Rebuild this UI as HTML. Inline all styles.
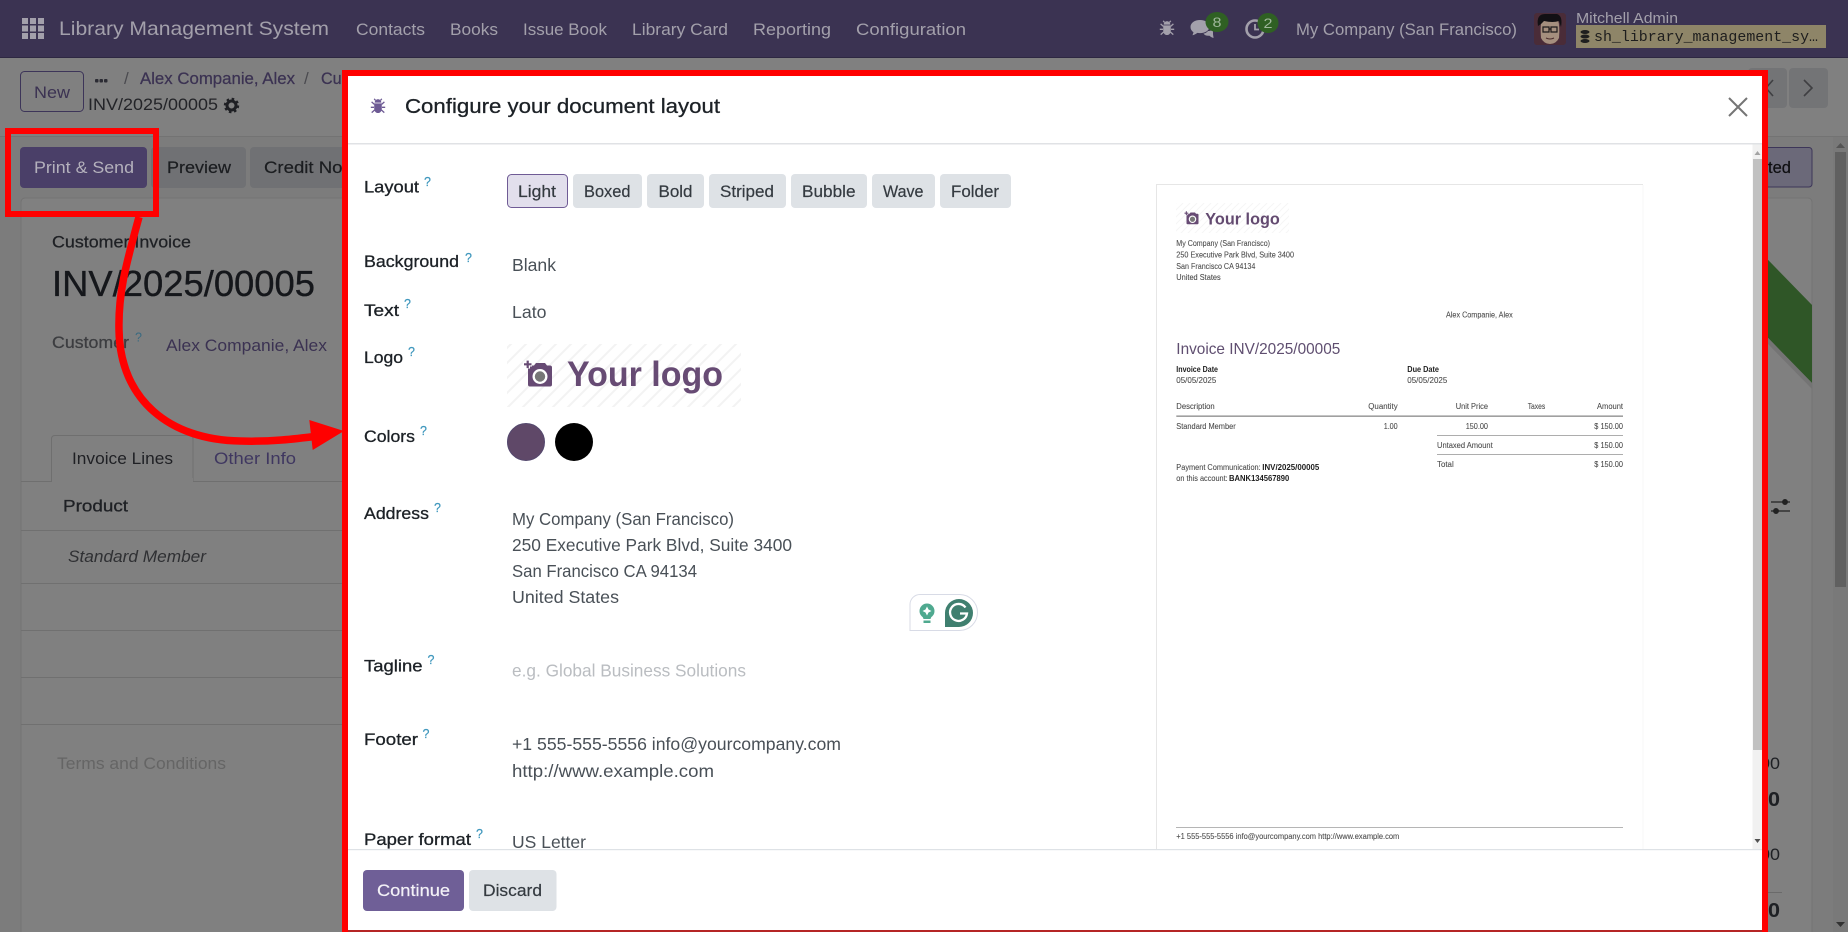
<!DOCTYPE html>
<html lang="en">
<head>
<meta charset="utf-8">
<title>Configure your document layout</title>
<style>
html,body{margin:0;padding:0;width:1848px;height:932px;overflow:hidden;background:#808080}
svg{display:block;position:absolute;left:0;top:0}
text{font-family:"Liberation Sans",sans-serif;white-space:pre}
.nav{font-size:16.5px;fill:#a3a0ab}
.lab{font-size:17px;fill:#1c2126;stroke:#1c2126;stroke-width:.3px}
.q{font-size:12.5px;fill:#3f97bd;stroke:#3f97bd;stroke-width:.2px}
.val{font-size:17.5px;fill:#495057}
.btn{font-size:17px;fill:#343a40;stroke:#343a40;stroke-width:.2px}
.s{font-size:8.6px;fill:#4a4a4a;stroke:#4a4a4a;stroke-width:.08px}
.sb{font-size:8.6px;fill:#1d1d1d;font-weight:bold}
.bg{font-size:17px;fill:#1e2024}
</style>
</head>
<body>
<svg width="1848" height="932" viewBox="0 0 1848 932" xmlns="http://www.w3.org/2000/svg">
<defs>
<pattern id="hb" patternUnits="userSpaceOnUse" width="15" height="15">
<path d="M-4 4L4 -4M0 15L15 0M11 19L19 11" stroke="#f3f3f3" stroke-width="2"/>
</pattern>
<pattern id="hs" patternUnits="userSpaceOnUse" width="7" height="7">
<path d="M-2 2L2 -2M0 7L7 0M5 9L9 5" stroke="#f6f6f6" stroke-width="1"/>
</pattern>
<symbol id="bug" viewBox="0 0 16 16">
<path d="M4.6 4.6C4.8 2.4 6.2 1.2 8 1.2s3.2 1.2 3.4 3.4z"/>
<path d="M4.2 5.4h7.6v5.2c0 2.6-1.6 4.4-3.8 4.4s-3.8-1.8-3.8-4.4z"/>
<path d="M4.4 6.4L1.6 3.9M11.6 6.4l2.8-2.5M4 9.3H.8M12 9.3h3.2M4.6 12l-2.9 2.6M11.4 12l2.9 2.6M5.5 2.4L4.2.8M10.5 2.4L11.8.8" stroke="currentColor" stroke-width="1.3" fill="none"/>
</symbol>
<symbol id="cam" viewBox="0 0 30 28">
<path d="M5 7.5q0-2 2-2h4l2-2.5h9l2 2.5h3q2 0 2 2v17q0 2-2 2H7q-2 0-2-2z" fill="#674b74"/>
<circle cx="17" cy="16.5" r="7.5" fill="#fff"/>
<circle cx="17" cy="16.5" r="5.2" fill="#777"/>
<path d="M0 4h9M4.500 0v8.500" stroke="#fff" stroke-width="5"/>
<path d="M1 4.300h7.500M4.700 .6v7.500" stroke="#674b74" stroke-width="2.200"/>
</symbol>
<clipPath id="nameclip"><rect x="0" y="0" width="342" height="136"/></clipPath>
</defs>

<!-- backdrop page -->
<rect width="1848" height="932" fill="#808080"/>
<rect x="0" y="136" width="1848" height="796" fill="#7c7c7c"/>
<rect x="0" y="136" width="1848" height="1" fill="#737373"/>
<rect x="21" y="198" width="1791" height="740" rx="4" fill="#808080" stroke="#737373"/>

<!-- navbar -->
<rect width="1848" height="58" fill="#3b3352"/>
<rect y="57" width="1848" height="1" fill="#2e2842"/>
<g fill="#a3a0ab">
<rect x="22" y="18" width="6" height="6"/><rect x="30" y="18" width="6" height="6"/><rect x="38" y="18" width="6" height="6"/>
<rect x="22" y="25.500" width="6" height="6"/><rect x="30" y="25.500" width="6" height="6"/><rect x="38" y="25.500" width="6" height="6"/>
<rect x="22" y="33" width="6" height="6"/><rect x="30" y="33" width="6" height="6"/><rect x="38" y="33" width="6" height="6"/>
</g>
<text x="59" y="35" class="nav" style="font-size:19.500px" textLength="270" lengthAdjust="spacingAndGlyphs">Library Management System</text>
<text x="356" y="35" class="nav" textLength="69" lengthAdjust="spacingAndGlyphs">Contacts</text>
<text x="450" y="35" class="nav" textLength="48" lengthAdjust="spacingAndGlyphs">Books</text>
<text x="523" y="35" class="nav" textLength="84" lengthAdjust="spacingAndGlyphs">Issue Book</text>
<text x="632" y="35" class="nav" textLength="96" lengthAdjust="spacingAndGlyphs">Library Card</text>
<text x="753" y="35" class="nav" textLength="78" lengthAdjust="spacingAndGlyphs">Reporting</text>
<text x="856" y="35" class="nav" textLength="110" lengthAdjust="spacingAndGlyphs">Configuration</text>

<use href="#bug" x="1159" y="20" width="16" height="16" fill="#a3a0ab" color="#a3a0ab"/>
<!-- chat -->
<path d="M1200 20c-5.500 0-9.500 3-9.500 7 0 2.200 1.200 4 3 5.300l-1 3c2-.5 3.500-1.300 4.800-2.400 .9 .2 1.800 .2 2.700 .2 5.500 0 9.500-3 9.500-6.500S1205.500 20 1200 20z" fill="#a3a0ab"/>
<path d="M1208 31c2.500 0 4.500-.8 5-2v5c0 1 .5 2.500 .5 4-1.500-.5-3-1.300-4-2.300-2.500 .4-5-.4-6-2.200 2 0 3.500-1.500 4.500-2.500z" fill="#a3a0ab"/>
<ellipse cx="1217" cy="22" rx="11.500" ry="10" fill="#2f6023"/>
<text x="1212.500" y="27" style="font-size:13.500px" fill="#9fb79a" textLength="9" lengthAdjust="spacingAndGlyphs">8</text>
<!-- activity clock -->
<circle cx="1255" cy="29" r="8.500" fill="none" stroke="#a3a0ab" stroke-width="2.600"/>
<path d="M1255 24v5.500h4" stroke="#a3a0ab" stroke-width="1.800" fill="none"/>
<ellipse cx="1268" cy="23" rx="10.500" ry="10" fill="#2f6023"/>
<text x="1263.500" y="28" style="font-size:13.500px" fill="#9fb79a" textLength="9" lengthAdjust="spacingAndGlyphs">2</text>
<text x="1296" y="35" class="nav" textLength="221" lengthAdjust="spacingAndGlyphs">My Company (San Francisco)</text>
<!-- avatar -->
<rect x="1534" y="13" width="32" height="32" rx="3" fill="#4a2c38"/>
<path d="M1541 38q-1-14 1-18l16 0q2 6 1 18q-3 6-9 6t-9-6z" fill="#a58f7e"/>
<path d="M1538 26q-2-12 7-12h12q6 2 4 13l-2-6q-6 2-15 0l-3 3z" fill="#121014"/>
<path d="M1543 27h6v5h-6zM1551 27h6v5h-6zM1549 29h2" fill="none" stroke="#1e1a1c" stroke-width="1.200"/>
<path d="M1546 38q4 2 8 0" stroke="#4a2c2c" stroke-width="1" fill="none"/>
<text x="1576" y="23" class="nav" style="font-size:15px" textLength="102" lengthAdjust="spacingAndGlyphs">Mitchell Admin</text>
<rect x="1576" y="25" width="250" height="23" fill="#8e8568"/>
<g fill="#1f1f1f"><ellipse cx="1585" cy="32" rx="4.500" ry="2"/><ellipse cx="1585" cy="36.500" rx="4.500" ry="2"/><ellipse cx="1585" cy="41" rx="4.500" ry="2"/></g>
<text x="1594" y="41" style="font-family:'Liberation Mono',monospace;font-size:15px" fill="#1e1e1e" textLength="224" lengthAdjust="spacingAndGlyphs">sh_library_management_sy…</text>

<!-- control panel -->
<rect x="20.500" y="71.500" width="63" height="40" rx="4" fill="none" stroke="#3d3559"/>
<text x="34" y="98" class="bg" style="fill:#3b3252" textLength="36" lengthAdjust="spacingAndGlyphs">New</text>
<g fill="#2b2b33"><rect x="95" y="79" width="3.500" height="3.500" rx="1"/><rect x="99.500" y="79" width="3.500" height="3.500" rx="1"/><rect x="104" y="79" width="3.500" height="3.500" rx="1"/></g>
<text x="124" y="84" class="bg" style="fill:#4a4a4f">/</text>
<text x="140" y="84" class="bg" style="fill:#3b3252;stroke:#3b3252;stroke-width:.25px" textLength="155" lengthAdjust="spacingAndGlyphs">Alex Companie, Alex</text>
<text x="304" y="84" class="bg" style="fill:#4a4a4f">/</text>
<g clip-path="url(#nameclip)"><text x="321" y="84" class="bg" style="fill:#3b3252;stroke:#3b3252;stroke-width:.25px" textLength="70" lengthAdjust="spacingAndGlyphs">Customer</text></g>
<text x="88" y="110" class="bg" style="fill:#232428" textLength="130" lengthAdjust="spacingAndGlyphs">INV/2025/00005</text>
<circle cx="231.500" cy="105.500" r="4.500" fill="none" stroke="#1f2024" stroke-width="3"/>
<circle cx="231.500" cy="105.500" r="6.500" fill="none" stroke="#1f2024" stroke-width="2.400" stroke-dasharray="2.500 2.600"/>

<rect x="1748" y="68" width="39" height="40" rx="4" fill="#737476"/>
<rect x="1789" y="68" width="39" height="40" rx="4" fill="#737476"/>
<path d="M1773 80l-7 8 7 8" stroke="#3f3f42" stroke-width="1.600" fill="none"/>
<path d="M1804 80l8 8-8 8" stroke="#3f3f42" stroke-width="1.600" fill="none"/>

<!-- buttons behind -->
<rect x="20" y="147" width="127" height="41" rx="4" fill="#4a3f68"/>
<text x="34" y="173" class="bg" style="fill:#b4b1bc" textLength="100" lengthAdjust="spacingAndGlyphs">Print &amp; Send</text>
<rect x="151" y="147" width="95" height="41" rx="4" fill="#707174"/>
<text x="167" y="173" class="bg" style="fill:#1b1d20;stroke:#1b1d20;stroke-width:.2px" textLength="64" lengthAdjust="spacingAndGlyphs">Preview</text>
<rect x="250" y="147" width="120" height="41" rx="4" fill="#707174"/>
<text x="264" y="173" class="bg" style="fill:#1b1d20;stroke:#1b1d20;stroke-width:.2px" textLength="94" lengthAdjust="spacingAndGlyphs">Credit Note</text>
<rect x="1700" y="147.500" width="112" height="39.500" rx="3" fill="#6b6979" stroke="#3d3659"/>
<text x="1768" y="173" class="bg" style="fill:#0f0f12;stroke:#0f0f12;stroke-width:.2px" textLength="23" lengthAdjust="spacingAndGlyphs">ted</text>

<!-- ribbon -->
<path d="M1700 190L1812 305V383L1700 268z" fill="#2f5627"/>
<path d="M1768 338L1812 383v6L1768 344z" fill="#747474"/>

<!-- sheet contents -->
<text x="52" y="247.500" class="bg" style="stroke:#1e2024;stroke-width:.25px" textLength="139" lengthAdjust="spacingAndGlyphs">Customer Invoice</text>
<text x="52" y="296" style="font-size:36.500px;stroke:#15171b;stroke-width:.35px" fill="#15171b" textLength="263" lengthAdjust="spacingAndGlyphs">INV/2025/00005</text>
<text x="52" y="348" class="bg" style="fill:#3c3d40;stroke:#3c3d40;stroke-width:.25px" textLength="77" lengthAdjust="spacingAndGlyphs">Customer</text>
<text x="135" y="341.500" class="q" style="fill:#3a6a80;stroke:none">?</text>
<text x="166" y="351" class="bg" style="fill:#3b3252" textLength="161" lengthAdjust="spacingAndGlyphs">Alex Companie, Alex</text>
<path d="M21 481.500H51.500V439q0-3.500 3.500-3.500H189.500q3.500 0 3.500 3.500V481.500H342" fill="none" stroke="#6f6f6f"/>
<rect x="52" y="478" width="141" height="5" fill="#808080"/>
<text x="72" y="464" class="bg" style="fill:#1f2024" textLength="101" lengthAdjust="spacingAndGlyphs">Invoice Lines</text>
<text x="214" y="464" class="bg" style="fill:#3f3760" textLength="82" lengthAdjust="spacingAndGlyphs">Other Info</text>
<text x="63" y="511.500" class="bg" style="stroke:#1e2024;stroke-width:.3px" textLength="65" lengthAdjust="spacingAndGlyphs">Product</text>
<g fill="#707070">
<rect x="21" y="530" width="321" height="1"/>
<rect x="21" y="583" width="321" height="1"/>
<rect x="21" y="630" width="321" height="1"/>
<rect x="21" y="677" width="321" height="1"/>
<rect x="21" y="724" width="321" height="1"/>
</g>
<text x="68" y="562" class="bg" style="fill:#2f3033;font-style:italic" textLength="138" lengthAdjust="spacingAndGlyphs">Standard Member</text>
<text x="57" y="769" class="bg" style="fill:#656565" textLength="169" lengthAdjust="spacingAndGlyphs">Terms and Conditions</text>

<text x="1760" y="769" class="bg" textLength="20" lengthAdjust="spacingAndGlyphs">00</text>
<text x="1768" y="806" class="bg" style="font-size:20px;font-weight:bold" textLength="12" lengthAdjust="spacingAndGlyphs">0</text>
<text x="1760" y="860" class="bg" textLength="20" lengthAdjust="spacingAndGlyphs">00</text>
<rect x="1768" y="892" width="14" height="1" fill="#6a6a6a"/>
<text x="1768" y="917" class="bg" style="font-size:20px;font-weight:bold" textLength="12" lengthAdjust="spacingAndGlyphs">0</text>

<!-- sliders icon -->
<g stroke="#222" stroke-width="1.300" fill="#222">
<path d="M1771 502h19M1771 511h19" fill="none"/>
<circle cx="1785" cy="502" r="2.300"/><circle cx="1776" cy="511" r="2.300"/>
</g>

<!-- outer scrollbar -->
<rect x="1833" y="137" width="15" height="795" fill="#797979"/>
<rect x="1835" y="152" width="11" height="435" fill="#606060"/>
<path d="M1836 148l4.500-5 4.500 5z" fill="#555"/>
<path d="M1836 922l4.500 5 4.500-5z" fill="#333"/>

<!-- red annotation -->
<rect x="8" y="131" width="148" height="83" fill="none" stroke="#ff0000" stroke-width="6"/>
<path d="M139 217C128 258 118 290 119 330C120 400 170 440 240 441C270 442 295 439 318 436" fill="none" stroke="#ff0000" stroke-width="7.500"/>
<path d="M309.300 420L344 431L312.700 450z" fill="#ff0000"/>

<!-- modal -->
<rect x="348" y="76" width="1414" height="854" fill="#fff"/>
<rect x="348" y="143" width="1414" height="1.500" fill="#e0e2e5"/>
<use href="#bug" x="370" y="98" width="16" height="16" fill="#6d5a94" color="#6d5a94"/>
<text x="405" y="113" style="font-size:20.500px;stroke:#1c2126;stroke-width:.3px" fill="#1c2126" textLength="315" lengthAdjust="spacingAndGlyphs">Configure your document layout</text>
<path d="M1729 98L1747 116M1747 98L1729 116" stroke="#757575" stroke-width="2"/>

<!-- modal labels -->
<text x="364" y="192.500" class="lab" textLength="55" lengthAdjust="spacingAndGlyphs">Layout</text><text x="424" y="186" class="q">?</text>
<text x="364" y="267" class="lab" textLength="95" lengthAdjust="spacingAndGlyphs">Background</text><text x="465" y="262" class="q">?</text>
<text x="364" y="316" class="lab" textLength="35" lengthAdjust="spacingAndGlyphs">Text</text><text x="404" y="308" class="q">?</text>
<text x="364" y="363" class="lab" textLength="39" lengthAdjust="spacingAndGlyphs">Logo</text><text x="408" y="356" class="q">?</text>
<text x="364" y="442" class="lab" textLength="51" lengthAdjust="spacingAndGlyphs">Colors</text><text x="420" y="435" class="q">?</text>
<text x="364" y="519" class="lab" textLength="65" lengthAdjust="spacingAndGlyphs">Address</text><text x="434" y="512" class="q">?</text>
<text x="364" y="671.500" class="lab" textLength="58.500" lengthAdjust="spacingAndGlyphs">Tagline</text><text x="427.500" y="664" class="q">?</text>
<text x="364" y="745" class="lab" textLength="54" lengthAdjust="spacingAndGlyphs">Footer</text><text x="422.500" y="738" class="q">?</text>
<text x="364" y="845" class="lab" textLength="107" lengthAdjust="spacingAndGlyphs">Paper format</text><text x="476" y="838" class="q">?</text>

<!-- layout buttons -->
<rect x="507.500" y="174.500" width="60" height="33" rx="4" fill="#e2dfec" stroke="#6f5b95"/>
<text x="518" y="197" class="btn" textLength="38" lengthAdjust="spacingAndGlyphs">Light</text>
<rect x="573" y="174" width="69" height="34" rx="4" fill="#dee2e6"/>
<text x="584" y="197" class="btn" textLength="46.500" lengthAdjust="spacingAndGlyphs">Boxed</text>
<rect x="647" y="174" width="57" height="34" rx="4" fill="#dee2e6"/>
<text x="658.500" y="197" class="btn" textLength="34" lengthAdjust="spacingAndGlyphs">Bold</text>
<rect x="709" y="174" width="77" height="34" rx="4" fill="#dee2e6"/>
<text x="720" y="197" class="btn" textLength="54" lengthAdjust="spacingAndGlyphs">Striped</text>
<rect x="791" y="174" width="76" height="34" rx="4" fill="#dee2e6"/>
<text x="802" y="197" class="btn" textLength="53.500" lengthAdjust="spacingAndGlyphs">Bubble</text>
<rect x="872" y="174" width="63" height="34" rx="4" fill="#dee2e6"/>
<text x="883" y="197" class="btn" textLength="40.500" lengthAdjust="spacingAndGlyphs">Wave</text>
<rect x="940" y="174" width="71" height="34" rx="4" fill="#dee2e6"/>
<text x="951" y="197" class="btn" textLength="48" lengthAdjust="spacingAndGlyphs">Folder</text>

<!-- values -->
<text x="512" y="271" class="val" textLength="44" lengthAdjust="spacingAndGlyphs">Blank</text>
<text x="512" y="318" class="val" textLength="34.500" lengthAdjust="spacingAndGlyphs">Lato</text>
<rect x="507" y="344" width="234" height="63" fill="url(#hb)"/>
<use href="#cam" x="523" y="360" width="30" height="28"/>
<text x="567" y="386" style="font-size:35px;font-weight:bold" fill="#674b74" textLength="156" lengthAdjust="spacingAndGlyphs">Your logo</text>

<circle cx="526" cy="442" r="18.500" fill="#5f4868" stroke="#54486e" stroke-width="1"/>
<circle cx="574" cy="442" r="19" fill="#000"/>

<text x="512" y="525" class="val" textLength="222" lengthAdjust="spacingAndGlyphs">My Company (San Francisco)</text>
<text x="512" y="551" class="val" textLength="280" lengthAdjust="spacingAndGlyphs">250 Executive Park Blvd, Suite 3400</text>
<text x="512" y="577" class="val" textLength="185" lengthAdjust="spacingAndGlyphs">San Francisco CA 94134</text>
<text x="512" y="603" class="val" textLength="107" lengthAdjust="spacingAndGlyphs">United States</text>

<!-- grammarly -->
<path d="M920 594.500H959.500a18 18 0 0 1 0 36H910V604.500a10 10 0 0 1 10-10z" fill="#fff" stroke="#d8dbe6" stroke-width="1"/>
<circle cx="927" cy="611" r="7.500" fill="#4fa98f"/>
<path d="M922 615h10l-1.500 4h-7z" fill="#4fa98f"/>
<rect x="923.500" y="620.500" width="7" height="2.500" fill="#4fa98f"/>
<path d="M927 606.500l1.500 3 3 1.500-3 1.500-1.500 3-1.500-3-3-1.500 3-1.500z" fill="#fff"/>
<circle cx="959" cy="613" r="14" fill="#3f7f6f"/>
<rect x="945" y="613" width="14" height="14" fill="#3f7f6f"/>
<path d="M965.500 607.500a8.500 8.500 0 1 0 1.500 6h-7" fill="none" stroke="#fff" stroke-width="2.300"/>

<text x="512" y="676.500" class="val" style="fill:#babdc1" textLength="234" lengthAdjust="spacingAndGlyphs">e.g. Global Business Solutions</text>
<text x="512" y="750" class="val" textLength="329" lengthAdjust="spacingAndGlyphs">+1 555-555-5556 info@yourcompany.com</text>
<text x="512" y="777" class="val" textLength="202" lengthAdjust="spacingAndGlyphs">http://www.example.com</text>
<text x="512" y="848" class="val" textLength="74" lengthAdjust="spacingAndGlyphs">US Letter</text>

<!-- preview -->
<path d="M1156.500 849V184.500H1643" fill="none" stroke="#e6e6e6" stroke-width="1"/>
<rect x="1642.500" y="185" width="1" height="664" fill="#f7f7f7"/>
<rect x="1176" y="203" width="113" height="30" fill="url(#hs)"/>
<use href="#cam" x="1184" y="211" width="15" height="14"/>
<text x="1205.300" y="224.500" style="font-size:16.500px;font-weight:bold" fill="#634a70" textLength="74.500" lengthAdjust="spacingAndGlyphs">Your logo</text>
<text x="1176.300" y="246" class="s" textLength="93.700" lengthAdjust="spacingAndGlyphs">My Company (San Francisco)</text>
<text x="1176.300" y="257.500" class="s" textLength="117.700" lengthAdjust="spacingAndGlyphs">250 Executive Park Blvd, Suite 3400</text>
<text x="1176.300" y="269" class="s" textLength="79" lengthAdjust="spacingAndGlyphs">San Francisco CA 94134</text>
<text x="1176.300" y="280" class="s" textLength="44.400" lengthAdjust="spacingAndGlyphs">United States</text>
<text x="1446" y="317.500" class="s" textLength="66.700" lengthAdjust="spacingAndGlyphs">Alex Companie, Alex</text>
<text x="1176.300" y="354" style="font-size:16px" fill="#5f4e70" textLength="164" lengthAdjust="spacingAndGlyphs">Invoice INV/2025/00005</text>
<text x="1176.300" y="372" class="sb" textLength="41.700" lengthAdjust="spacingAndGlyphs">Invoice Date</text>
<text x="1407.300" y="372" class="sb" textLength="31.700" lengthAdjust="spacingAndGlyphs">Due Date</text>
<text x="1176.300" y="383" class="s" textLength="40" lengthAdjust="spacingAndGlyphs">05/05/2025</text>
<text x="1407.300" y="383" class="s" textLength="40" lengthAdjust="spacingAndGlyphs">05/05/2025</text>
<text x="1176.300" y="409" class="s" textLength="38.400" lengthAdjust="spacingAndGlyphs">Description</text>
<text x="1368.300" y="409" class="s" textLength="29.400" lengthAdjust="spacingAndGlyphs">Quantity</text>
<text x="1455.700" y="409" class="s" textLength="32.300" lengthAdjust="spacingAndGlyphs">Unit Price</text>
<text x="1527.700" y="409" class="s" textLength="17.600" lengthAdjust="spacingAndGlyphs">Taxes</text>
<text x="1597" y="409" class="s" textLength="26" lengthAdjust="spacingAndGlyphs">Amount</text>
<rect x="1176.300" y="415.500" width="446.700" height="1.300" fill="#888"/>
<text x="1176.300" y="429" class="s" textLength="59.400" lengthAdjust="spacingAndGlyphs">Standard Member</text>
<text x="1383.700" y="429" class="s" textLength="14" lengthAdjust="spacingAndGlyphs">1.00</text>
<text x="1465.700" y="429" class="s" textLength="22.300" lengthAdjust="spacingAndGlyphs">150.00</text>
<text x="1594.300" y="429" class="s" textLength="28.700" lengthAdjust="spacingAndGlyphs">$ 150.00</text>
<rect x="1437" y="435" width="186" height="1" fill="#adadad"/>
<text x="1437" y="448" class="s" textLength="55.700" lengthAdjust="spacingAndGlyphs">Untaxed Amount</text>
<text x="1594.300" y="448" class="s" textLength="28.700" lengthAdjust="spacingAndGlyphs">$ 150.00</text>
<rect x="1437" y="454" width="186" height="1" fill="#adadad"/>
<text x="1437" y="467" class="s" textLength="16.700" lengthAdjust="spacingAndGlyphs">Total</text>
<text x="1594.300" y="467" class="s" textLength="28.700" lengthAdjust="spacingAndGlyphs">$ 150.00</text>
<text x="1176.300" y="470" class="s" textLength="84.400" lengthAdjust="spacingAndGlyphs">Payment Communication:</text>
<text x="1262.300" y="470" class="sb" textLength="57" lengthAdjust="spacingAndGlyphs">INV/2025/00005</text>
<text x="1176.300" y="481" class="s" textLength="51.400" lengthAdjust="spacingAndGlyphs">on this account:</text>
<text x="1229" y="481" class="sb" textLength="60.300" lengthAdjust="spacingAndGlyphs">BANK134567890</text>
<rect x="1176" y="827" width="447" height="1" fill="#b5b5b5"/>
<text x="1176.300" y="839" class="s" textLength="223" lengthAdjust="spacingAndGlyphs">+1 555-555-5556 info@yourcompany.com http://www.example.com</text>

<!-- modal scrollbar -->
<rect x="1752.500" y="144.500" width="9.500" height="705" fill="#f1f1f1"/>
<rect x="1753" y="159" width="9" height="591" fill="#c1c1c1"/>
<path d="M1754.500 155l3-4 3 4z" fill="#a3a3a3"/>
<path d="M1754.500 839l3 4 3-4z" fill="#505050"/>

<!-- footer -->
<rect x="348" y="849.500" width="1414" height="81" fill="#fff"/>
<rect x="348" y="849" width="1414" height="1.200" fill="#dee2e6"/>
<rect x="363" y="870" width="101" height="41" rx="4" fill="#6f5f97"/>
<text x="377" y="896" class="btn" style="fill:#f3f1f7;stroke:#f3f1f7" textLength="73" lengthAdjust="spacingAndGlyphs">Continue</text>
<rect x="469" y="870" width="87.500" height="41" rx="4" fill="#dee2e6"/>
<text x="483" y="896" class="btn" textLength="59" lengthAdjust="spacingAndGlyphs">Discard</text>

<!-- modal red frame -->
<rect x="342" y="70" width="6" height="862" fill="#ff0000"/>
<rect x="342" y="70" width="1426" height="6" fill="#ff0000"/>
<rect x="1762" y="70" width="6" height="862" fill="#ff0000"/>
<rect x="348" y="930" width="1414" height="2" fill="#b52525"/>
</svg>
</body>
</html>
